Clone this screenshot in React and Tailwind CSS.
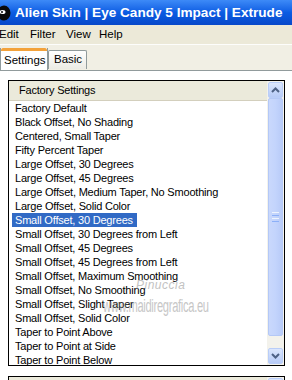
import React from 'react';

const presets = [
  'Factory Default',
  'Black Offset, No Shading',
  'Centered, Small Taper',
  'Fifty Percent Taper',
  'Large Offset, 30 Degrees',
  'Large Offset, 45 Degrees',
  'Large Offset, Medium Taper, No Smoothing',
  'Large Offset, Solid Color',
  'Small Offset, 30 Degrees',
  'Small Offset, 30 Degrees from Left',
  'Small Offset, 45 Degrees',
  'Small Offset, 45 Degrees from Left',
  'Small Offset, Maximum Smoothing',
  'Small Offset, No Smoothing',
  'Small Offset, Slight Taper',
  'Small Offset, Solid Color',
  'Taper to Point Above',
  'Taper to Point at Side',
  'Taper to Point Below',
];

const Chevron = ({ down }) => (
  <svg width="9" height="6" viewBox="0 0 9 6">
    <path
      d={down ? 'M1 1L4.5 4.5L8 1' : 'M1 5L4.5 1.5L8 5'}
      fill="none"
      stroke="#4d6185"
      strokeWidth="2"
    />
  </svg>
);

const ScrollButton = ({ down }) => (
  <div className="h-[16px] w-[15px] flex items-center justify-center rounded-[2px] border border-[#b9cdf8] bg-gradient-to-b from-[#dbe6fd] to-[#b7cbf7]">
    <Chevron down={down} />
  </div>
);

export default function App() {
  return (
    <div
      className="w-[292px] h-[380px] overflow-hidden bg-[#ece9d8] flex flex-col relative"
      style={{ fontFamily: '"Liberation Sans", Arial, sans-serif' }}
    >
      {/* Title bar */}
      <div className="h-[25px] shrink-0 flex items-center bg-gradient-to-b from-[#3d8af7] via-[#0b5ce3] to-[#0848c9]">
        <svg width="14" height="16" viewBox="0 0 14 16" className="ml-[-3px] mr-[4px]">
          <ellipse cx="7" cy="8" rx="6.5" ry="7.5" fill="#0a0a0a" />
          <ellipse cx="5.5" cy="7" rx="3" ry="2" fill="#ffffff" />
          <circle cx="5" cy="7" r="1" fill="#0a0a0a" />
        </svg>
        <span className="text-white font-bold text-[13.6px] leading-none whitespace-nowrap">
          Alien Skin | Eye Candy 5 Impact | Extrude
        </span>
      </div>

      {/* Menu bar */}
      <div className="h-[20px] shrink-0 flex items-center text-[11.5px] text-black border-b border-[#fdfdfb]">
        <span className="ml-[-1px] w-[31px]">Edit</span>
        <span className="w-[36px]">Filter</span>
        <span className="w-[33px]">View</span>
        <span>Help</span>
      </div>

      {/* Tabs */}
      <div className="h-[25px] shrink-0 flex items-end bg-[#f1efe4] relative z-10">
        <div className="h-[22px] w-[48px] bg-white border-x border-[#919b9c] flex flex-col">
          <div className="h-[3px] bg-[#f3a23b] rounded-t-[2px]" />
          <div className="flex-1 flex items-center pl-[3px] text-[11.5px]">Settings</div>
        </div>
        <div className="h-[19px] w-[39px] mb-[1px] border border-b-0 border-[#919b9c] rounded-t-[2px] bg-gradient-to-b from-white to-[#ecebe4] flex items-center pl-[5px] text-[11.5px]">
          Basic
        </div>
      </div>

      {/* Panel */}
      <div className="flex-1 bg-white border-t border-[#919b9c] pt-[9px] pl-[8px]">
        <div className="w-[277px] h-[286px] border border-black bg-white flex overflow-hidden">
          <div className="flex-1 flex flex-col overflow-hidden">
            <div className="h-[20px] shrink-0 bg-[#ebeadb] border-b border-[#d3cfbd] flex items-center pl-[10px] text-[11px] tracking-[-0.2px]">
              Factory Settings
            </div>
            {presets.map((name, i) => (
              <div key={name} className="h-[14px] shrink-0 flex items-center pl-[3px] text-[11px] tracking-[-0.2px] whitespace-nowrap">
                <span
                  className={`h-[14px] flex items-center pl-[3px] pr-[4px] ${
                    i === 8 ? 'bg-[#316ac5] text-white' : 'text-black'
                  }`}
                >
                  {name}
                </span>
              </div>
            ))}
          </div>
          {/* Scrollbar */}
          <div className="w-[17px] shrink-0 bg-[#f3f2ec] flex flex-col items-center pt-[1px] pb-[1px]">
            <ScrollButton />
            <div className="h-[238px] w-[15px] rounded-[2px] border border-[#b4c8f6] bg-gradient-to-r from-[#c9d8fc] via-[#c3d4fc] to-[#b8cbf8] flex flex-col items-center justify-center gap-[2px]">
              <div className="h-[1px] w-[7px] bg-[#eef4fe]" />
              <div className="h-[1px] w-[7px] bg-[#8cb0f8]" />
              <div className="h-[1px] w-[7px] bg-[#eef4fe]" />
              <div className="h-[1px] w-[7px] bg-[#8cb0f8]" />
            </div>
            <div className="flex-1" />
            <ScrollButton down />
          </div>
        </div>

        {/* Second box (cut off) */}
        <div className="mt-[10px] w-[277px] h-[20px] border border-black bg-[#ebeadb] flex justify-end">
          <div className="w-[17px] bg-[#f3f2ec] pt-[1px] flex justify-center">
            <div className="h-[16px] w-[15px] rounded-[2px] border border-[#b9cdf8] bg-gradient-to-b from-[#dbe6fd] to-[#b7cbf7]" />
          </div>
        </div>
      </div>

      {/* Watermark */}
      <div className="absolute left-[136px] top-[276px] text-[12px] text-[#9a9a9a] opacity-60 italic tracking-[0.5px] pointer-events-none">
        Pinuccia
      </div>
      <div className="absolute left-[103px] top-[293px] text-[18px] text-[#8f8f8f] opacity-50 tracking-[-0.5px] pointer-events-none whitespace-nowrap origin-left scale-x-[0.62]">
        www.maidiregrafica.eu
      </div>
    </div>
  );
}
